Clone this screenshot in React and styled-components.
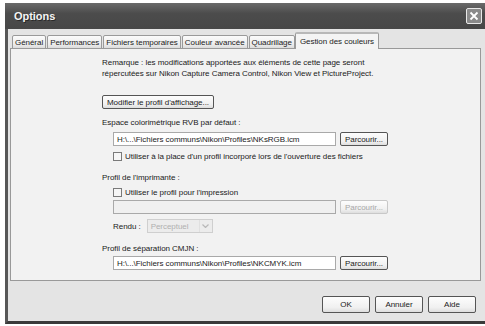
import styled, { createGlobalStyle } from "styled-components";

const GlobalStyle = createGlobalStyle`
  body {
    margin: 0;
    background: #ffffff;
    font-family: "Liberation Sans", Arial, sans-serif;
    font-size: 8px;
    letter-spacing: -0.05px;
    color: #1a1a1a;
  }
`;

const Window = styled.div`
  margin: 3px 0 0 5px;
  width: 480px;
  height: 321px;
  box-sizing: border-box;
  background: #e4e4e4;
  border-left: 3px solid #575757;
  border-bottom: 3px solid #3a3a3a;
  display: flex;
  flex-direction: column;
`;

const TitleBar = styled.div`
  height: 26px;
  margin-left: -3px;
  padding: 0 3px 0 9px;
  background: linear-gradient(#6a6a6a, #4c4c4c 40%, #474747);
  display: flex;
  align-items: center;
  justify-content: space-between;
  color: #f4f4f4;
  font-weight: bold;
  font-size: 11px;
  text-shadow: 1px 1px 0 #2a2a2a;
`;

const CloseButton = styled.div`
  width: 14px;
  height: 14px;
  border: 1px solid #e8e8e8;
  border-radius: 2px;
  background: #8a8a8a;
  display: flex;
  align-items: center;
  justify-content: center;
`;

const Body = styled.div`
  flex: 1;
  padding: 3px 4px 0 2px;
  display: flex;
  flex-direction: column;
`;

const TabRow = styled.div`
  display: flex;
  align-items: flex-end;
  padding-left: 2px;
  height: 17px;
  position: relative;
  z-index: 1;
`;

const Tab = styled.div`
  height: ${(p) => (p.$active ? "17px" : "14px")};
  box-sizing: border-box;
  padding: 0 ${(p) => (p.$active ? "4px" : "2px")};
  margin-right: ${(p) => (p.$active ? "0" : "1px")};
  margin-left: ${(p) => (p.$active ? "-1px" : "0")};
  border: 1px solid #9a9a9a;
  border-bottom: ${(p) => (p.$active ? "none" : "1px solid #9a9a9a")};
  border-radius: 2px 2px 0 0;
  background: ${(p) =>
    p.$active ? "#f4f4f4" : "linear-gradient(#fbfbfb, #ececec 70%, #dcdcdc)"};
  border-top: ${(p) => (p.$active ? "2px solid #b8b8b8" : "1px solid #9a9a9a")};
  display: flex;
  align-items: center;
  white-space: nowrap;
  color: #222;
`;

const Panel = styled.div`
  height: 233px;
  box-sizing: border-box;
  margin-top: -1px;
  border: 1px solid #999;
  background: #f2f2f2;
  padding: 8px 0 0 91px;
  display: flex;
  flex-direction: column;
`;

const Note = styled.p`
  margin: 0;
  line-height: 11px;
  white-space: nowrap;
`;

const Label = styled.div`
  line-height: 11px;
  margin-top: ${(p) => p.$top || 0}px;
`;

const Indent = styled.div`
  padding-left: 11px;
  display: flex;
  flex-direction: column;
`;

const Row = styled.div`
  display: flex;
  align-items: center;
  gap: ${(p) => p.$gap || 4}px;
  margin-top: ${(p) => p.$top || 0}px;
`;

const Button = styled.div`
  height: ${(p) => p.$h || 14}px;
  box-sizing: border-box;
  padding: 0 4px;
  border: 1px solid ${(p) => (p.$disabled ? "#c8c8c8" : "#555")};
  border-radius: 2px;
  background: linear-gradient(#fdfdfd, #f0f0f0 70%, #dedede);
  color: ${(p) => (p.$disabled ? "#a8a8a8" : "#1a1a1a")};
  display: flex;
  align-items: center;
  justify-content: center;
  white-space: nowrap;
  width: ${(p) => (p.$w ? `${p.$w}px` : "auto")};
`;

const Input = styled.div`
  width: 223px;
  height: 14px;
  box-sizing: border-box;
  border: 1px solid #a9a9a9;
  background: ${(p) => (p.$disabled ? "#f0f0f0" : "#ffffff")};
  padding-left: 3px;
  display: flex;
  align-items: center;
  white-space: nowrap;
  overflow: hidden;
`;

const Check = styled.span`
  width: 9px;
  height: 9px;
  box-sizing: border-box;
  border: 1px solid #7a7a7a;
  background: #f6f6f6;
  display: inline-block;
  flex-shrink: 0;
`;

const Select = styled.div`
  width: 66px;
  height: 14px;
  box-sizing: border-box;
  border: 1px solid #cfcfcf;
  background: #ececec;
  display: flex;
  align-items: center;
  justify-content: space-between;
  padding-left: 3px;
  color: #b0b0b0;
`;

const SelectArrow = styled.span`
  width: 12px;
  height: 12px;
  border-left: 1px solid #e0e0e0;
  display: flex;
  align-items: center;
  justify-content: center;
`;

const Footer = styled.div`
  flex: 1;
  display: flex;
  justify-content: flex-end;
  align-items: center;
  gap: 5px;
  padding: 6px 5px 0 0;
`;

const tabs = [
  "Général",
  "Performances",
  "Fichiers temporaires",
  "Couleur avancée",
  "Quadrillage",
];

export default function App() {
  return (
    <>
      <GlobalStyle />
      <Window>
        <TitleBar>
          Options
          <CloseButton>
            <svg width="10" height="10" viewBox="0 0 10 10">
              <path d="M1.5 1.5 L8.5 8.5 M8.5 1.5 L1.5 8.5" stroke="#fff" strokeWidth="1.8" />
            </svg>
          </CloseButton>
        </TitleBar>
        <Body>
          <TabRow>
            {tabs.map((t) => (
              <Tab key={t}>{t}</Tab>
            ))}
            <Tab $active>Gestion des couleurs</Tab>
          </TabRow>
          <Panel>
            <Note>
              Remarque : les modifications apportées aux éléments de cette page seront
              <br />
              répercutées sur Nikon Capture Camera Control, Nikon View et PictureProject.
            </Note>
            <Row $top={16}>
              <Button $h={14}>Modifier le profil d'affichage...</Button>
            </Row>
            <Label $top={8}>Espace colorimétrique RVB par défaut :</Label>
            <Indent>
              <Row $top={4}>
                <Input>H:\...\Fichiers communs\Nikon\Profiles\NKsRGB.icm</Input>
                <Button $w={48}>Parcourir...</Button>
              </Row>
              <Row $top={6} $gap={3}>
                <Check />
                Utiliser à la place d'un profil incorporé lors de l'ouverture des fichiers
              </Row>
            </Indent>
            <Label $top={11}>Profil de l'imprimante :</Label>
            <Indent>
              <Row $top={5} $gap={3}>
                <Check />
                Utiliser le profil pour l'impression
              </Row>
              <Row $top={3}>
                <Input $disabled />
                <Button $w={48} $disabled>
                  Parcourir...
                </Button>
              </Row>
              <Row $top={5} $gap={6}>
                Rendu :
                <Select>
                  Perceptuel
                  <SelectArrow>
                    <svg width="7" height="4" viewBox="0 0 7 4">
                      <path d="M0.5 0.5 L3.5 3.5 L6.5 0.5" fill="none" stroke="#b8b8b8" strokeWidth="1.2" />
                    </svg>
                  </SelectArrow>
                </Select>
              </Row>
            </Indent>
            <Label $top={10}>Profil de séparation CMJN :</Label>
            <Indent>
              <Row $top={2}>
                <Input>H:\...\Fichiers communs\Nikon\Profiles\NKCMYK.icm</Input>
                <Button $w={48}>Parcourir...</Button>
              </Row>
            </Indent>
          </Panel>
          <Footer>
            <Button $w={48} $h={17}>OK</Button>
            <Button $w={48} $h={17}>Annuler</Button>
            <Button $w={48} $h={17}>Aide</Button>
          </Footer>
        </Body>
      </Window>
    </>
  );
}
